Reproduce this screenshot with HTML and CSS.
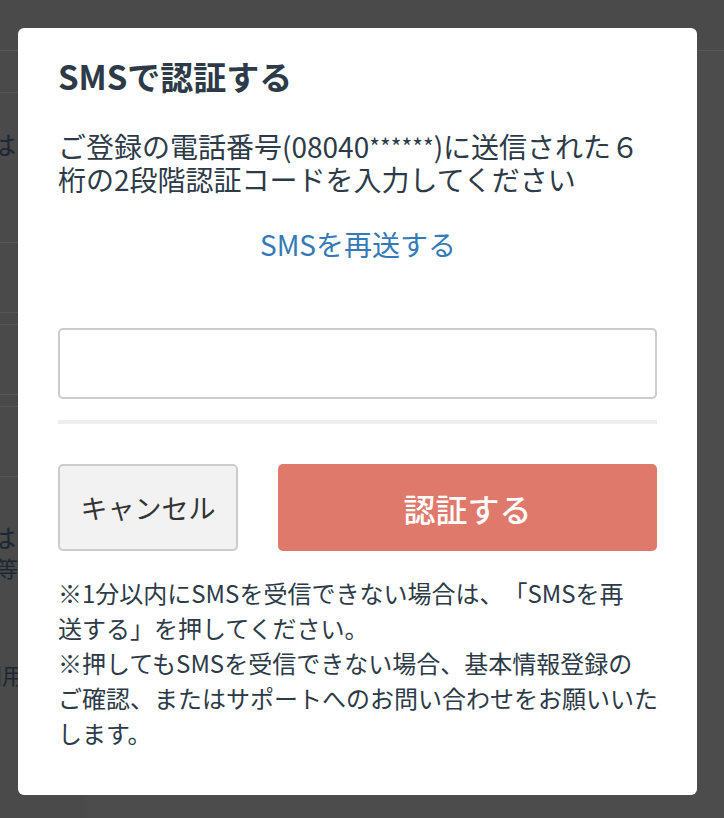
FILE: index.html
```html
<!DOCTYPE html>
<html lang="ja">
<head>
    <meta charset="UTF-8">
    <meta name="viewport" content="width=device-width, initial-scale=1.0">
    <title>SMSで認証する</title>
    <link rel="stylesheet" href="styles.css">
</head>
<body>
    <!-- page behind the overlay -->
    <div class="page">
        <header class="page-header"></header>
        <div class="page-body">
            <aside class="sidebar">
                <div class="side-row side-row-top"></div>
                <div class="side-row side-row-tall"><p class="peek">は</p></div>
                <div class="side-row side-row-box"></div>
                <div class="side-row side-row-box side-row-framed"></div>
                <div class="side-row side-row-box side-row-framed"></div>
                <div class="side-text">
                    <p class="peek">は</p>
                    <p class="peek peek-small">等</p>
                    <p class="peek peek-small peek-low">利用</p>
                </div>
            </aside>
            <div class="page-main"></div>
        </div>
    </div>

    <!-- modal -->
    <div class="overlay">
        <div class="modal">
            <h1 class="modal-title">SMSで認証する</h1>
            <p class="modal-lead">ご登録の電話番号(08040<span class="mask">******</span>)に送信された６<br>桁の2段階認証コードを入力してください</p>
            <a class="resend" href="#">SMSを再送する</a>

            <input class="code-input" type="text" inputmode="numeric">
            <hr class="divider">

            <div class="actions">
                <button class="btn btn-cancel" type="button">キャンセル</button>
                <button class="btn btn-submit" type="button">認証する</button>
            </div>

            <div class="notes">
                <p>※1分以内にSMSを受信できない場合は、「SMSを再<br>送する」を押してください。</p>
                <p>※押してもSMSを受信できない場合、基本情報登録の<br>ご確認、またはサポートへのお問い合わせをお願いいた<br>します。</p>
            </div>
        </div>
    </div>
</body>
</html>
```

FILE: styles.css
```css
body {
    margin: 0;
    background-color: #4b4c4b;
    font-family: "Noto Sans CJK JP", "Noto Sans", sans-serif;
    color: #2d3a48;
    height: 818px;
    overflow: hidden;
}

/* dimmed page behind the modal */
.page {
    height: 100%;
}

.page-header {
    height: 50px;
    background-color: #4a4a4a;
    border-bottom: 1px solid #575757;
}

.page-body {
    display: flex;
    height: calc(100% - 51px);
}

.sidebar {
    width: 86px;
    background-color: #494a49;
    overflow: hidden;
}

.side-row {
    border-bottom: 1px solid #575757;
}

.side-row-top {
    height: 41px;
}

.side-row-tall {
    height: 150px;
    padding-top: 36px;
    box-sizing: border-box;
}

.side-row-box {
    height: 69px;
}

.side-row-framed {
    margin-top: 11px;
    border-top: 1px solid #575757;
}

.side-text {
    padding-top: 45px;
}

.peek {
    margin: 0;
    font-size: 26px;
    line-height: 30px;
    color: #1d2733;
    white-space: nowrap;
    text-indent: -10px;
}

.peek-small {
    font-size: 22px;
    text-indent: -4px;
}

.peek-low {
    margin-top: 77px;
    text-indent: -20px;
}

.page-main {
    flex: 1;
}

/* modal */
.overlay {
    position: fixed;
    top: 0;
    left: 0;
    right: 0;
    bottom: 0;
}

.modal {
    position: absolute;
    top: 28px;
    left: 18px;
    width: 679px;
    height: 767px;
    box-sizing: border-box;
    padding: 28px 39px 40px 40px;
    background-color: #fff;
    border-radius: 6px;
}

.modal-title {
    margin: 0;
    font-size: 33px;
    line-height: 40px;
    font-weight: 700;
    color: #2d3a48;
}

.modal-lead {
    margin: 34px 0 0;
    font-size: 28px;
    line-height: 33px;
    white-space: nowrap;
}

.mask {
    font-size: 23px;
    line-height: 1;
    vertical-align: 2px;
}

.resend {
    display: block;
    margin-top: 32px;
    text-align: center;
    font-size: 28px;
    line-height: 33px;
    color: #337ab7;
    text-decoration: none;
}

.code-input {
    display: block;
    width: calc(100% - 1px);
    height: 71px;
    margin-top: 67px;
    box-sizing: border-box;
    border: 2px solid #cccccc;
    border-radius: 5px;
    background-color: #fff;
    font-size: 28px;
    padding: 0 14px;
}

.divider {
    width: calc(100% - 1px);
    margin: 21px 0 0;
    border: 0;
    height: 4px;
    background-color: #eeeeee;
}

.actions {
    display: flex;
    gap: 40px;
    margin-top: 40px;
    margin-right: 1px;
}

.btn {
    height: 87px;
    border-radius: 5px;
    font-family: inherit;
    font-size: 27px;
    cursor: pointer;
}

.btn-cancel {
    width: 180px;
    background-color: #f2f2f2;
    border: 2px solid #cccccc;
    color: #333;
}

.btn-submit {
    flex: 1;
    background-color: #df796b;
    border: 0;
    color: #fff;
    font-size: 32px;
    font-weight: 500;
}

.notes {
    margin-top: 24px;
    font-size: 24px;
    line-height: 35px;
    text-spacing-trim: space-all;
    white-space: nowrap;
}

.notes p {
    margin: 0;
}
```
